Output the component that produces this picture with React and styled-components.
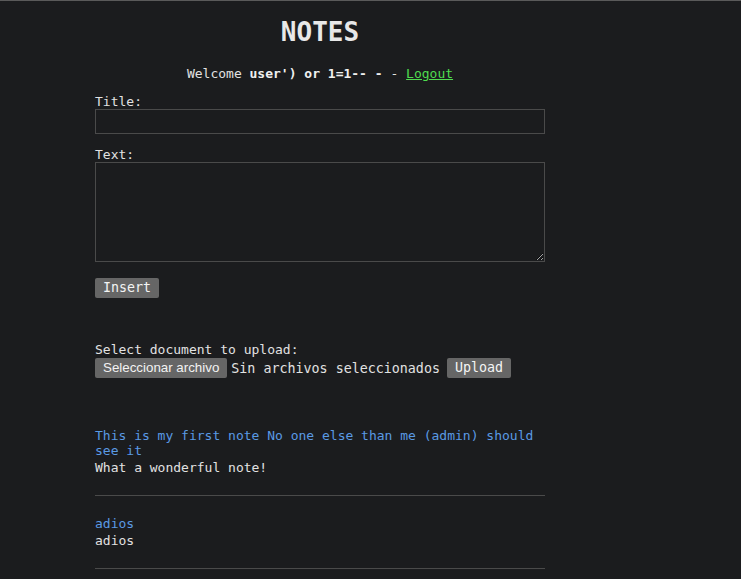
import React from 'react';
import styled, { createGlobalStyle } from 'styled-components';

const GlobalStyle = createGlobalStyle`
  html, body {
    margin: 0;
    padding: 0;
    background: #1b1c1e;
  }
  body {
    border-top: 1px solid #5a5a5a;
    color: #e2e2e2;
    font-family: 'DejaVu Sans Mono', 'Liberation Mono', monospace;
    font-size: 13px;
  }
`;

const Page = styled.div`
  width: 450px;
  margin-left: 95px;
  padding-top: 16px;
`;

const Heading = styled.h1`
  margin: 0;
  font-size: 26px;
  line-height: 30px;
  text-align: center;
  color: #e8e8e8;
`;

const Welcome = styled.p`
  margin: 19px 0 13px;
  text-align: center;
  line-height: 15px;

  b {
    color: #f0f0f0;
  }
`;

const LogoutLink = styled.a`
  color: #4fdc4f;
  text-decoration: underline;
`;

const Form = styled.form`
  display: flex;
  flex-direction: column;
`;

const Label = styled.label`
  display: block;
  line-height: 15px;
  margin-top: ${(p) => (p.$gap ? '13px' : '0')};
`;

const TextInput = styled.input`
  box-sizing: border-box;
  width: 450px;
  height: 25px;
  margin: 0;
  background: transparent;
  border: 1px solid #4a4a4a;
  color: #e2e2e2;
  font: inherit;
  outline: none;
`;

const TextArea = styled.textarea`
  box-sizing: border-box;
  width: 450px;
  height: 100px;
  margin: 0;
  background: transparent;
  border: 1px solid #4a4a4a;
  color: #e2e2e2;
  font: inherit;
  outline: none;
  display: block;
`;

const Button = styled.button`
  align-self: flex-start;
  background: #666;
  color: #f4f4f4;
  border: none;
  border-radius: 2px;
  font-family: 'DejaVu Sans Mono', monospace;
  font-size: 13.33px;
  line-height: 15px;
  padding: 2px 8px 3px;
  margin: ${(p) => p.$margin || '0'};
  cursor: pointer;
`;

const Upload = styled.div`
  margin-top: 44px;
`;

const UploadRow = styled.div`
  display: flex;
  align-items: center;
  gap: 4px;
  margin-top: 1px;
`;

const FileButton = styled.label`
  background: #666;
  color: #f2f2f2;
  border-radius: 2px;
  font-family: 'Liberation Sans', Arial, sans-serif;
  font-size: 13.33px;
  line-height: 15px;
  padding: 2px 8px 3px;
  cursor: pointer;

  input {
    display: none;
  }
`;

const FileStatus = styled.span`
  font-size: 13.33px;
  line-height: 15px;
  margin-right: 3px;
`;

const Notes = styled.div`
  margin-top: 50px;
`;

const Note = styled.div`
  padding-bottom: 20px;
  border-bottom: 1px solid #4a4a4a;

  & + & {
    margin-top: 20px;
  }
`;

const NoteTitle = styled.div`
  color: #5a9ae4;
  line-height: 15px;
`;

const NoteBody = styled.div`
  line-height: 15px;
  margin-top: 2px;
`;

const notes = [
  {
    title: 'This is my first note No one else than me (admin) should see it',
    body: 'What a wonderful note!',
  },
  { title: 'adios', body: 'adios' },
];

export default function App() {
  return (
    <>
      <GlobalStyle />
      <Page>
        <Heading>NOTES</Heading>
        <Welcome>
          Welcome <b>user') or 1=1-- -</b> - <LogoutLink href="#">Logout</LogoutLink>
        </Welcome>

        <Form onSubmit={(e) => e.preventDefault()}>
          <Label htmlFor="title">Title:</Label>
          <TextInput id="title" type="text" />
          <Label htmlFor="text" $gap>Text:</Label>
          <TextArea id="text" />
          <Button type="submit" $margin="16px 0 0">Insert</Button>
        </Form>

        <Upload>
          <div>Select document to upload:</div>
          <UploadRow>
            <FileButton>
              Seleccionar archivo
              <input type="file" />
            </FileButton>
            <FileStatus>Sin archivos seleccionados</FileStatus>
            <Button type="button">Upload</Button>
          </UploadRow>
        </Upload>

        <Notes>
          {notes.map((n) => (
            <Note key={n.title}>
              <NoteTitle>{n.title}</NoteTitle>
              <NoteBody>{n.body}</NoteBody>
            </Note>
          ))}
        </Notes>
      </Page>
    </>
  );
}
